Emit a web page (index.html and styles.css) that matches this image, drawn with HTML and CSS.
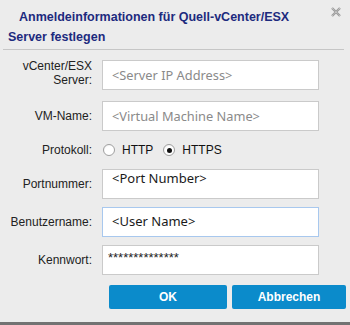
FILE: index.html
```html
<!DOCTYPE html>
<html lang="de">
<head>
<meta charset="utf-8">
<title>Anmeldeinformationen</title>
<link rel="stylesheet" href="styles.css">
</head>
<body>
<div class="dialog">
  <div class="header">
    <div class="title">Anmeldeinformationen für Quell-vCenter/ESX Server festlegen</div>
    <svg class="close" width="10" height="10" viewBox="0 0 10 10">
      <path d="M1 1 L9 9 M9 1 L1 9" stroke="#9c9c9c" stroke-width="2.4" fill="none"/>
      <path d="M1 1 L9 9 M9 1 L1 9" stroke="#e2e2e2" stroke-width="0.8" stroke-dasharray="1 1" fill="none"/>
    </svg>
  </div>
  <div class="sep"></div>
  <form class="form">
    <div class="row">
      <label class="label label-top">vCenter/ESX<br>Server:</label>
      <input class="field placeholder" type="text" value="&lt;Server IP Address&gt;">
    </div>
    <div class="row row-vm">
      <label class="label">VM-Name:</label>
      <input class="field placeholder" type="text" value="&lt;Virtual Machine Name&gt;">
    </div>
    <div class="row row-proto">
      <label class="label">Protokoll:</label>
      <div class="radios">
        <span class="radio"></span><span class="rtext">HTTP</span>
        <span class="radio checked"></span><span class="rtext">HTTPS</span>
      </div>
    </div>
    <div class="row row-port">
      <label class="label">Portnummer:</label>
      <input class="field value top" type="text" value="&lt;Port Number&gt;">
    </div>
    <div class="row row-user">
      <label class="label">Benutzername:</label>
      <input class="field value focus" type="text" value="&lt;User Name&gt;">
    </div>
    <div class="row row-pass">
      <label class="label">Kennwort:</label>
      <input class="field pass" type="text" value="**************">
    </div>
    <div class="buttons">
      <button type="button" class="btn btn-ok">OK</button>
      <button type="button" class="btn btn-cancel">Abbrechen</button>
    </div>
  </form>
</div>
</body>
</html>
```
FILE: styles.css
```css
html, body {
  margin: 0;
  padding: 0;
  background: #ececec;
}
.dialog {
  width: 350px;
  height: 325px;
  box-sizing: border-box;
  border-bottom: 3px solid #727272;
  background: #ececec;
  font-family: "Liberation Sans", Arial, sans-serif;
  overflow: hidden;
}
.header {
  display: flex;
  align-items: flex-start;
  padding: 7px 9px 0 8px;
  gap: 6px;
}
.title {
  flex: 1;
  font-weight: bold;
  font-size: 12.5px;
  line-height: 20px;
  color: #1d2a7e;
  text-indent: 11px;
  height: 40px;
}
.close {
  margin-top: 0;
  flex: none;
}
.sep {
  margin: 2px 6px 0 3px;
  border-top: 1px solid #c6c6c6;
}
.form {
  margin: 0;
  padding-top: 10px;
}
.row {
  display: flex;
  align-items: center;
  gap: 10px;
}
.label {
  width: 92px;
  flex: none;
  text-align: right;
  font-size: 12px;
  line-height: 14px;
  color: #222;
}
.label-top {
  align-self: flex-start;
  line-height: 13.5px;
}
.field {
  width: 217px;
  height: 30px;
  box-sizing: border-box;
  border: 1px solid #cacaca;
  background: #fff;
  margin: 0;
  padding: 0 8px;
  font-family: "Noto Sans", "Open Sans", sans-serif;
  outline: none;
}
.placeholder {
  font-size: 12.8px;
  color: #8a8a8a;
  padding-left: 9px;
}
.value {
  font-size: 13px;
  color: #1a1a1a;
  padding-left: 9px;
}
.top {
  padding-top: 0;
  padding-bottom: 12px;
}
.focus {
  border-color: #a8c8ee;
  padding-bottom: 2px;
}
.pass {
  font-family: "Liberation Sans", Arial, sans-serif;
  font-size: 13px;
  color: #222;
  padding-left: 5px;
  padding-bottom: 5px;
}
.row-vm { margin-top: 11px; }
.row-proto { margin-top: 9px; height: 20px; }
.row-port { margin-top: 9px; }
.row-user { margin-top: 8px; }
.row-pass { margin-top: 8px; }
.radios {
  display: flex;
  align-items: center;
  margin-left: 1px;
}
.radio {
  width: 12px;
  height: 12px;
  box-sizing: border-box;
  border-radius: 50%;
  border: 1px solid #a0a0a0;
  background: radial-gradient(circle at 60% 65%, #ffffff 55%, #e4e4e4 100%);
  display: flex;
  align-items: center;
  justify-content: center;
}
.radio.checked::after {
  content: "";
  width: 5px;
  height: 5px;
  border-radius: 50%;
  background: #111;
}
.rtext {
  font-size: 12px;
  color: #111;
  margin-left: 7px;
  margin-right: 10px;
}
.buttons {
  display: flex;
  gap: 5px;
  padding-left: 109px;
  margin-top: 10px;
}
.btn {
  height: 24px;
  border: none;
  border-radius: 2px;
  background: #0b8bcb;
  color: #fff;
  font-family: "Liberation Sans", Arial, sans-serif;
  font-weight: bold;
  font-size: 12px;
  padding: 0;
  margin: 0;
}
.btn-ok { width: 118px; }
.btn-cancel { width: 114px; }
```
